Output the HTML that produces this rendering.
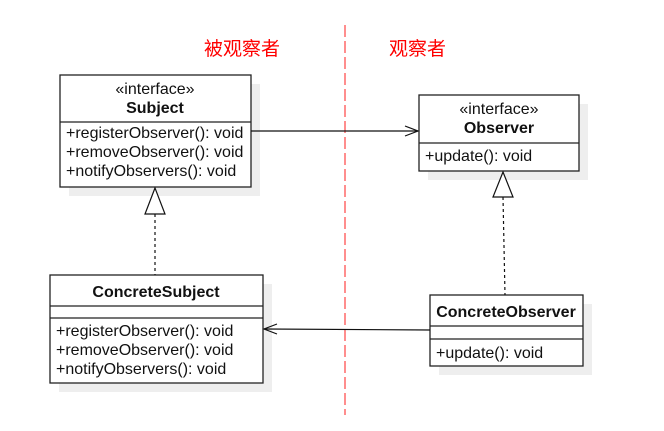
<!DOCTYPE html>
<html><head><meta charset="utf-8"><style>
body{margin:0;background:#fff;width:664px;height:426px;overflow:hidden;font-family:"Liberation Sans",sans-serif}
svg text{font-family:"Liberation Sans","Noto Sans CJK SC",sans-serif;font-size:16px;fill:#111}
</style></head><body>
<svg width="664" height="426" xmlns="http://www.w3.org/2000/svg">
<g fill="#eeeeee">
<rect x="69" y="84" width="191" height="112"/>
<rect x="428" y="104" width="160" height="76"/>
<rect x="59" y="284" width="213" height="108"/>
<rect x="439" y="304" width="153" height="71"/>
</g>
<line x1="345" y1="25" x2="345" y2="415" stroke="#f33" stroke-width="1.3" stroke-dasharray="12,4" opacity="0.85"/>
<text x="204" y="55" style="fill:#f00;font-size:19px">被观察者</text>
<text x="389" y="55" style="fill:#f00;font-size:19px">观察者</text>
<g fill="#fff" stroke="#222" stroke-width="1.3">
<rect x="60" y="75" width="191" height="112"/>
<line x1="60" y1="122" x2="251" y2="122"/>
<rect x="419" y="95" width="160" height="76"/>
<line x1="419" y1="143" x2="579" y2="143"/>
<rect x="50" y="275" width="213" height="108"/>
<line x1="50" y1="306" x2="263" y2="306"/>
<line x1="50" y1="318" x2="263" y2="318"/>
<rect x="430" y="295" width="153" height="71"/>
<line x1="430" y1="326" x2="583" y2="326"/>
<line x1="430" y1="339" x2="583" y2="339"/>
</g>
<text x="155" y="94" text-anchor="middle">«interface»</text>
<text x="155" y="113" text-anchor="middle" font-weight="bold">Subject</text>
<text x="66" y="138">+registerObserver(): void</text>
<text x="66" y="157">+removeObserver(): void</text>
<text x="66" y="176">+notifyObservers(): void</text>
<text x="499" y="114" text-anchor="middle">«interface»</text>
<text x="499" y="133" text-anchor="middle" font-weight="bold">Observer</text>
<text x="425" y="161">+update(): void</text>
<text x="156" y="297" text-anchor="middle" font-weight="bold">ConcreteSubject</text>
<text x="56" y="336">+registerObserver(): void</text>
<text x="56" y="355">+removeObserver(): void</text>
<text x="56" y="374">+notifyObservers(): void</text>
<text x="506" y="317" text-anchor="middle" font-weight="bold">ConcreteObserver</text>
<text x="436" y="358">+update(): void</text>
<g fill="#fff" stroke="#111" stroke-width="1.2">
<polygon points="155,188 145,214 165,214"/>
<polygon points="503,172 493,197 513,197"/>
</g>
<g stroke="#111" stroke-width="1.2" fill="none">
<line x1="155" y1="214" x2="155" y2="275" stroke-dasharray="3,3"/>
<line x1="503" y1="197" x2="505" y2="295" stroke-dasharray="3,3"/>
<line x1="251" y1="131" x2="418" y2="131"/>
<polyline points="405,126 418,131 405,136"/>
<line x1="430" y1="330" x2="264" y2="329"/>
<polyline points="277,324 264,329 277,334"/>
</g>
</svg>
</body></html>
